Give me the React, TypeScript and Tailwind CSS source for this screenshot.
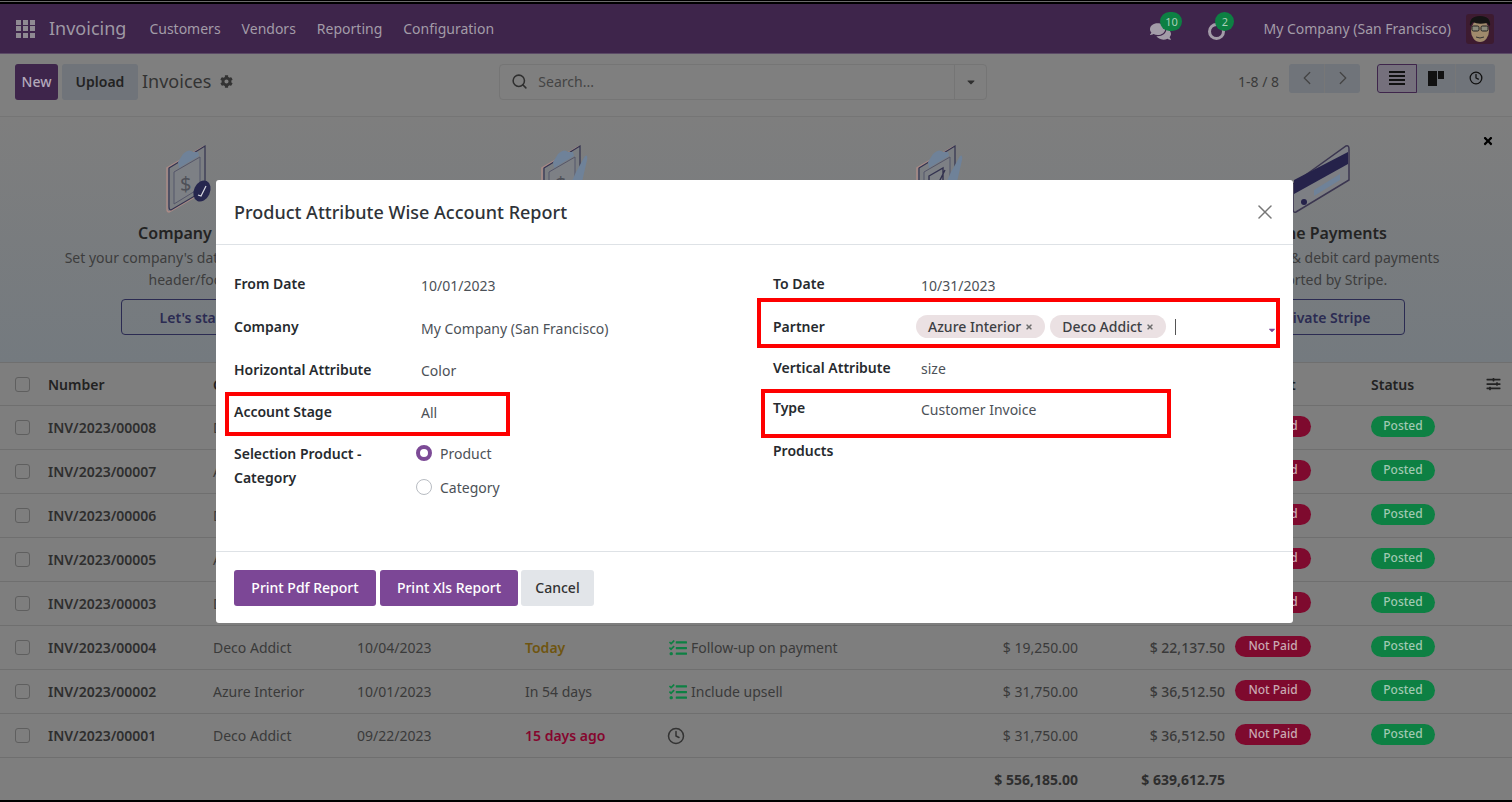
import React from "react";
import { Search, ChevronLeft, ChevronRight, X, Clock } from "lucide-react";
import { FaCog, FaComments, FaTasks, FaSlidersH, FaTimes, FaCaretDown } from "react-icons/fa";

const rows = [
  ["INV/2023/00008", "Deco Addict", "10/08/2023", "", "", "", "", ""],
  ["INV/2023/00007", "Azure Interior", "10/07/2023", "", "", "", "", ""],
  ["INV/2023/00006", "Deco Addict", "10/06/2023", "", "", "", "", ""],
  ["INV/2023/00005", "Azure Interior", "10/05/2023", "", "", "", "", ""],
  ["INV/2023/00003", "Deco Addict", "10/03/2023", "", "", "", "", ""],
  ["INV/2023/00004", "Deco Addict", "10/04/2023", "Today", "Follow-up on payment", "$ 19,250.00", "$ 22,137.50", "t"],
  ["INV/2023/00002", "Azure Interior", "10/01/2023", "In 54 days", "Include upsell", "$ 31,750.00", "$ 36,512.50", "n"],
  ["INV/2023/00001", "Deco Addict", "09/22/2023", "15 days ago", "", "$ 31,750.00", "$ 36,512.50", "c"],
];

const gridCols = "grid grid-cols-[48px_165px_144px_168px_142px_263px_148px_147px_146px_1fr] items-center";

function Clipboard({ variant }: { variant: "dollar" | "dollarHand" | "check" }) {
  return (
    <svg width="62" height="70" viewBox="0 0 62 70" fill="none">
      <path d="M2 24 L38 3 L38 48 L4 68 Q2 68 2 65 Z" fill="#7c7f84" stroke="#a98a86" strokeWidth="1.5" />
      <path d="M4 24 L40 2 L40 46 L6 66 Q4 66 4 63 Z" fill="#7b7e82" stroke="#33324f" strokeWidth="1.2" />
      <path d="M9 28 L35 13 L35 44 L9 60 Z" fill="#7d8085" stroke="#55566a" strokeWidth="1" />
      <path d="M13 18 L18 10 Q24 4 28 8 L33 8 L34 12 L14 24 Z" fill="#6f8299" />
      {variant !== "check" && (
        <text x="15" y="47" fontSize="20" fill="#4e5058" fontFamily="'Noto Sans', sans-serif">$</text>
      )}
      {variant === "check" && <path d="M14 32 L28 24 L28 44 L14 52 Z M16 42 L20 46 L30 26" stroke="#33324f" strokeWidth="1.4" />}
      {variant === "dollar" && (
        <g>
          <ellipse cx="37" cy="47" rx="8" ry="11" fill="#26264e" transform="rotate(25 37 47)" />
          <path d="M33 51 L36 52 L41 42" stroke="#d8d8e0" strokeWidth="1.2" />
        </g>
      )}
      {variant !== "dollar" && <path d="M36 28 L45 12 Q48 10 47 16 L42 38 L34 52 L28 46 Z" fill="#6f8299" />}
    </svg>
  );
}

function CreditCard() {
  return (
    <svg width="62" height="70" viewBox="0 0 62 70" fill="none">
      <path d="M3 40 L56 2 Q59 1 59 5 L59 36 L6 68 Q3 69 3 65 Z" fill="#7d7f84" stroke="#3b3650" strokeWidth="1.5" />
      <path d="M4 36 L58 8 L58 20 L4 50 Z" fill="#25224a" />
      <path d="M24 46 L50 30 L50 36 L24 52 Z" fill="#6f8299" />
      <circle cx="14" cy="58" r="3" fill="#25224a" />
    </svg>
  );
}

function Card({ icon, title, lines, cta, btnW }: { icon: React.ReactNode; title: string; lines: string[]; cta: string; btnW: string }) {
  return (
    <div className="flex flex-col items-center">
      <div className="h-[70px] flex items-start justify-center">{icon}</div>
      <div className="mt-[8px] text-[16px] leading-[22px] font-semibold text-[#232323]">{title}</div>
      <div className="mt-[3px] text-[14px] leading-[22px] text-[#3d3d3d] text-center whitespace-nowrap">
        {lines.map((l) => (
          <div key={l}>{l}</div>
        ))}
      </div>
      <div className={`mt-[8px] h-[36px] ${btnW} flex items-center justify-center rounded-[4px] border border-[#2b2b52] text-[14px] font-semibold text-[#2b2b52]`}>{cta}</div>
    </div>
  );
}

function Check() {
  return <span className="block w-[15px] h-[15px] rounded-[3px] border border-[#5f5f5f] ml-[15px]" />;
}

function Field({ label, value, h, labelCls = "" }: { label: string; value?: string; h: string; labelCls?: string }) {
  return (
    <div className={`flex items-center ${h}`}>
      <div className={`w-[187px] shrink-0 text-[14px] font-semibold text-[#262a2e] ${labelCls}`}>{label}</div>
      {value && <div className="text-[14px] text-[#4c5157] pt-[3px]">{value}</div>}
    </div>
  );
}

function Tag({ text }: { text: string }) {
  return (
    <span className="h-[23px] px-[12px] rounded-full bg-[#ebe1e3] text-[14px] font-medium text-[#3d3f44] flex items-center gap-[4px] whitespace-nowrap">
      {text}
      <FaTimes className="w-[8px] h-[8px] text-[#6b6b6b]" />
    </span>
  );
}

export default function App() {
  return (
    <div className="relative w-[1512px] h-[802px] overflow-hidden flex flex-col bg-[#7e7e7e] font-['Noto_Sans',sans-serif]">
      <div className="h-px bg-black shrink-0" />
      <div className="h-px bg-[#6a6a6a] shrink-0" />
      <div className="h-[2px] bg-black shrink-0" />

      {/* navbar */}
      <nav className="h-[50px] shrink-0 bg-[#3e254b] flex items-center pl-[16px] pr-[18px] border-b border-[#5b4a66]">
        <div className="grid grid-cols-3 gap-[1.5px] w-[19px]">
          {Array.from({ length: 9 }).map((_, i) => (
            <span key={i} className="h-[5px] bg-[#8f8a92]" />
          ))}
        </div>
        <span className="ml-[14px] text-[18px] text-[#9e98a4]">Invoicing</span>
        <div className="ml-[23px] flex gap-[21px] text-[14px] text-[#a39ca8]">
          <span>Customers</span>
          <span>Vendors</span>
          <span>Reporting</span>
          <span>Configuration</span>
        </div>
        <div className="ml-auto flex items-center">
          <div className="relative w-[21px] h-[20px] mr-[37px]">
            <FaComments className="w-[21px] h-[19px] text-[#a39ca8] mt-[3px]" />
            <span className="absolute left-[10px] -top-[7px] h-[19px] w-[22px] rounded-full bg-[#0d8043] text-[11px] leading-[19px] text-center text-[#a9cfb8]">10</span>
          </div>
          <div className="relative w-[18px] h-[20px] mr-[37px]">
            <span className="block w-[17px] h-[17px] mt-[4px] rounded-full border-[3px] border-[#a39ca8]" />
            <span className="absolute left-[7px] -top-[7px] h-[19px] w-[19px] rounded-full bg-[#0d8043] text-[11px] leading-[19px] text-center text-[#a9cfb8]">2</span>
          </div>
          <span className="text-[14px] text-[#a39ca8] whitespace-nowrap">My Company (San Francisco)</span>
          <svg className="ml-[15px] rounded-[3px]" width="28" height="30" viewBox="0 0 28 30">
            <rect width="28" height="30" fill="#3d1b30" />
            <ellipse cx="14" cy="17" rx="9" ry="11" fill="#a08a6c" />
            <path d="M4 12 Q3 2 14 2 Q25 2 24 12 L21 9 Q12 11 7 8 Z" fill="#141414" />
            <rect x="6" y="12" width="7" height="5" rx="1.5" fill="#8a8a7a" stroke="#222" />
            <rect x="15" y="12" width="7" height="5" rx="1.5" fill="#8a8a7a" stroke="#222" />
            <path d="M10 23 Q14 25 18 23" stroke="#333" fill="none" />
          </svg>
        </div>
      </nav>

      {/* control panel */}
      <div className="h-[63px] shrink-0 bg-[#7f7f7f] border-b border-[#757575] flex items-center pl-[15px] pr-[17px] pb-[8px] pt-[1px]">
        <div className="h-[36px] w-[43px] rounded-[3px] bg-[#3e254b] text-[14px] font-medium text-[#b3a8ba] flex items-center justify-center">New</div>
        <div className="ml-[4px] h-[36px] w-[76px] rounded-[3px] bg-[#70747a] text-[14px] font-semibold text-[#222] flex items-center justify-center">Upload</div>
        <span className="ml-[4px] text-[18px] text-[#333]">Invoices</span>
        <FaCog className="ml-[9px] w-[13px] h-[13px] text-[#333]" />
        <div className="ml-[266px] h-[36px] w-[488px] rounded-[4px] border border-[#757575] flex items-center">
          <Search className="ml-[11px] w-[17px] h-[17px] text-[#2f2f2f]" strokeWidth={2.2} />
          <span className="ml-[10px] text-[14px] text-[#444]">Search...</span>
          <div className="ml-auto w-[32px] h-full border-l border-[#757575] flex items-center justify-center">
            <FaCaretDown className="w-[12px] h-[12px] text-[#2f2f2f]" />
          </div>
        </div>
        <span className="ml-auto text-[14px] text-[#3a3a3a] whitespace-nowrap mb-[1px]">1-8 / 8</span>
        <div className="ml-[10px] flex h-[29px] -mt-[7px] rounded-[3px] bg-[#70747a] overflow-hidden">
          <span className="w-[36px] flex items-center justify-center border-r border-[#777]"><ChevronLeft className="w-[22px] h-[22px] text-[#444]" strokeWidth={1.4} /></span>
          <span className="w-[35px] flex items-center justify-center"><ChevronRight className="w-[22px] h-[22px] text-[#444]" strokeWidth={1.4} /></span>
        </div>
        <div className="ml-[17px] flex h-[29px] -mt-[7px] rounded-[3px] bg-[#70747a] overflow-hidden">
          <span className="w-[40px] flex items-center justify-center bg-[#75707c] border border-[#3e254b] rounded-l-[3px]">
            <svg width="16" height="14" viewBox="0 0 16 14"><path d="M0 1h16M0 5h16M0 9h16M0 13h16" stroke="#111" strokeWidth="2" /></svg>
          </span>
          <span className="w-[39px] flex items-center justify-center border-r border-[#777]">
            <svg width="16" height="15" viewBox="0 0 16 15"><path d="M0 0h9v15H0zM10 0h6v8h-6z" fill="#111" /></svg>
          </span>
          <span className="w-[39px] flex items-center justify-center"><Clock className="w-[14px] h-[14px] text-[#111]" strokeWidth={2.2} /></span>
        </div>
      </div>

      {/* onboarding banner */}
      <div className="relative h-[246px] shrink-0 bg-gradient-to-b from-[#7e7e7e] to-[#747a7f] border-b border-[#6f6f6f] pt-[27px] pl-[8px] pr-[4px] grid grid-cols-4">
        <Card icon={<Clipboard variant="dollar" />} title="Company Data" lines={["Set your company's data for documents", "header/footer."]} cta="Let's start!" btnW="w-[150px]" />
        <Card icon={<Clipboard variant="dollarHand" />} title="Bank Account" lines={["Enter your bank details", "to reconcile payments."]} cta="Add a bank" btnW="w-[150px]" />
        <Card icon={<Clipboard variant="check" />} title="Taxes" lines={["Set taxes and", "fiscal positions."]} cta="Set taxes" btnW="w-[150px]" />
        <Card icon={<CreditCard />} title="Online Payments" lines={["Enable credit & debit card payments", "supported by Stripe."]} cta="Activate Stripe" btnW="w-[168px]" />
        <FaTimes className="absolute right-[18px] top-[18px] w-[12px] h-[12px] text-black" />
      </div>

      {/* table */}
      <div className={`${gridCols} h-[43px] shrink-0 border-b border-[#6f6f6f] text-[14px] font-semibold text-[#222]`}>
        <Check />
        <span>Number</span>
        <span>Customer</span>
        <span>Invoice Date</span>
        <span>Due Date</span>
        <span>Next Activity</span>
        <span className="text-right">Tax Excluded</span>
        <span className="text-right">Total</span>
        <span className="pl-[10px]">Payment</span>
        <div className="flex items-center justify-between pr-[11px]">
          <span>Status</span>
          <FaSlidersH className="w-[15px] h-[14px] text-[#222]" />
        </div>
      </div>
      {rows.map((r) => (
        <div key={r[0]} className={`${gridCols} h-[44px] shrink-0 border-b border-[#6f6f6f] text-[14px] text-[#3a3a3a]`}>
          <Check />
          <span className="font-semibold text-[#2e2e2e]">{r[0]}</span>
          <span>{r[1]}</span>
          <span>{r[2]}</span>
          <span className={r[3] === "Today" ? "font-semibold text-[#6f5510]" : r[3] === "15 days ago" ? "font-semibold text-[#85062e]" : ""}>{r[3]}</span>
          <span className="col-span-1 flex items-center gap-[2px] whitespace-nowrap overflow-visible">
            {r[7] === "c" ? (
              <Clock className="w-[18px] h-[18px] text-[#333]" strokeWidth={2} />
            ) : r[4] ? (
              <>
                <FaTasks className="w-[22px] h-[18px] text-[#0d8043]" />
                {r[4]}
              </>
            ) : null}
          </span>
          <span className="text-right">{r[5]}</span>
          <span className="text-right font-medium">{r[6]}</span>
          <span className="pl-[10px]">
            <span className="inline-flex h-[21px] w-[76px] -translate-y-[2px] rounded-full bg-[#7e0a2e] text-[12px] font-medium text-[#c9a9b2] items-center justify-center">Not Paid</span>
          </span>
          <span>
            <span className="inline-flex h-[21px] w-[64px] -translate-y-[2px] rounded-full bg-[#0d8043] text-[12px] font-medium text-[#a0c9b2] items-center justify-center">Posted</span>
          </span>
        </div>
      ))}
      <div className={`${gridCols} h-[42px] shrink-0 text-[14px] font-bold text-[#2e2e2e]`}>
        <span className="col-span-6" />
        <span className="text-right">$ 556,185.00</span>
        <span className="text-right">$ 639,612.75</span>
      </div>
      <div className="flex-1 bg-black" />

      {/* modal */}
      <div className="absolute left-[216px] top-[180px] w-[1077px] h-[443px] bg-white rounded-[3px] flex flex-col">
        <div className="h-[65px] shrink-0 border-b border-[#dee2e6] flex items-center justify-between pl-[18px] pr-[16px]">
          <span className="text-[18px] font-medium text-[#2f3338]">Product Attribute Wise Account Report</span>
          <X className="w-[24px] h-[24px] text-[#777]" strokeWidth={1.5} />
        </div>
        <div className="flex-1 pt-[17px] pl-[18px] flex">
          <div className="w-[539px] flex flex-col">
            <Field label="From Date" value="10/01/2023" h="h-[43px]" />
            <Field label="Company" value="My Company (San Francisco)" h="h-[43px]" />
            <Field label="Horizontal Attribute" value="Color" h="h-[42px]" />
            <Field label="Account Stage" value="All" h="h-[42px]" />
            <div className="flex mt-[10px]">
              <div className="w-[182px] shrink-0 text-[14px] leading-[24px] font-semibold text-[#262a2e]">
                Selection Product -<br />Category
              </div>
              <div className="flex flex-col gap-[12px] text-[14px] text-[#4c5157]">
                <label className="flex items-center gap-[8px] h-[22px]">
                  <span className="w-[16px] h-[16px] rounded-full border-[4px] border-[#7c4a96] bg-white" />
                  Product
                </label>
                <label className="flex items-center gap-[8px] h-[22px]">
                  <span className="w-[16px] h-[16px] rounded-full border border-[#b8bcc2] bg-white" />
                  Category
                </label>
              </div>
            </div>
          </div>
          <div className="flex-1 flex flex-col pr-[16px]">
            <div className="flex items-center h-[43px]">
              <div className="w-[148px] shrink-0 text-[14px] font-semibold text-[#262a2e]">To Date</div>
              <div className="text-[14px] text-[#4c5157] pt-[3px]">10/31/2023</div>
            </div>
            <div className="flex items-center h-[43px]">
              <div className="w-[143px] shrink-0 text-[14px] font-semibold text-[#262a2e]">Partner</div>
              <div className="flex-1 flex items-center gap-[5px]">
                <Tag text="Azure Interior" />
                <Tag text="Deco Addict" />
                <span className="ml-[4px] w-px h-[16px] bg-[#555]" />
                <FaCaretDown className="ml-auto w-[10px] h-[10px] text-[#7c4a96] mt-[6px]" />
              </div>
            </div>
            <div className="flex items-center h-[38px]">
              <div className="w-[148px] shrink-0 text-[14px] font-semibold text-[#262a2e]">Vertical Attribute</div>
              <div className="text-[14px] text-[#4c5157] pt-[3px]">size</div>
            </div>
            <div className="flex items-center h-[43px]">
              <div className="w-[148px] shrink-0 text-[14px] font-semibold text-[#262a2e]">Type</div>
              <div className="text-[14px] text-[#4c5157] pt-[3px]">Customer Invoice</div>
            </div>
            <div className="flex items-center h-[43px]">
              <div className="w-[148px] shrink-0 text-[14px] font-semibold text-[#262a2e]">Products</div>
            </div>
          </div>
        </div>
        <div className="h-[72px] shrink-0 border-t border-[#dee2e6] flex items-center pl-[18px] gap-[4px]">
          <div className="h-[36px] w-[142px] rounded-[3px] bg-[#7c4796] text-[14px] font-medium text-white flex items-center justify-center">Print Pdf Report</div>
          <div className="h-[36px] w-[138px] rounded-[3px] bg-[#7c4796] text-[14px] font-medium text-white flex items-center justify-center">Print Xls Report</div>
          <div className="h-[36px] w-[73px] ml-[-1px] rounded-[3px] bg-[#e2e5e9] text-[14px] font-medium text-[#333] flex items-center justify-center">Cancel</div>
        </div>
      </div>

      {/* red annotation boxes */}
      <div className="absolute left-[225px] top-[392px] w-[285px] h-[44px] border-[4px] border-[#fe0000]" />
      <div className="absolute left-[757px] top-[298px] w-[523px] h-[50px] border-[4px] border-[#fe0000]" />
      <div className="absolute left-[761px] top-[389px] w-[410px] h-[49px] border-[4px] border-[#fe0000]" />
    </div>
  );
}
